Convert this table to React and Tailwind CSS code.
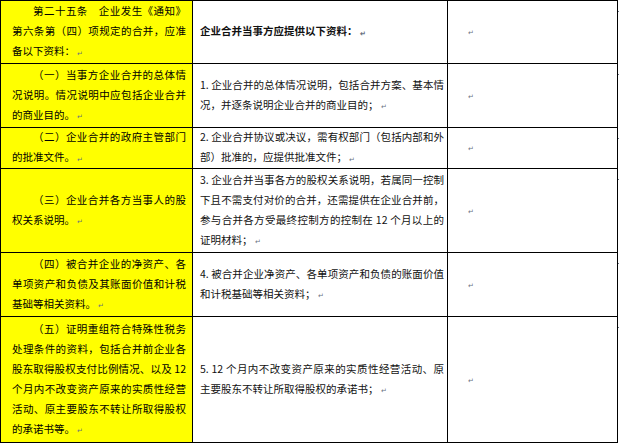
import React from "react";

const rows = [
  {
    h: "h-[63px]",
    left: [["第二十五条　企业发生《通知》", "第六条第（四）项规定的合并，应准", "备以下资料："]],
    right: { bold: true, lines: ["企业合并当事方应提供以下资料："] },
  },
  {
    h: "h-[64px]",
    left: [["（一）当事方企业合并的总体情", "况说明。情况说明中应包括企业合并", "的商业目的。"]],
    right: { lines: ["1. 企业合并的总体情况说明，包括合并方案、基本情", "况，并逐条说明企业合并的商业目的；"] },
  },
  {
    h: "h-[41px]",
    left: [["（二）企业合并的政府主管部门", "的批准文件。"]],
    right: { lines: ["2. 企业合并协议或决议，需有权部门（包括内部和外", "部）批准的，应提供批准文件；"] },
  },
  {
    h: "h-[84px]",
    left: [["（三）企业合并各方当事人的股", "权关系说明。"]],
    right: {
      lines: [
        "3. 企业合并当事各方的股权关系说明，若属同一控制",
        "下且不需支付对价的合并，还需提供在企业合并前，",
        "参与合并各方受最终控制方的控制在 12 个月以上的",
        "证明材料；",
      ],
    },
  },
  {
    h: "h-[64px]",
    left: [["（四）被合并企业的净资产、各", "单项资产和负债及其账面价值和计税", "基础等相关资料。"]],
    right: { lines: ["4. 被合并企业净资产、各单项资产和负债的账面价值", "和计税基础等相关资料；"] },
  },
  {
    h: "h-[127px]",
    last: true,
    left: [[
      "（五）证明重组符合特殊性税务",
      "处理条件的资料，包括合并前企业各",
      "股东取得股权支付比例情况、以及 12",
      "个月内不改变资产原来的实质性经营",
      "活动、原主要股东不转让所取得股权",
      "的承诺书等。",
    ]],
    right: { lines: ["5. 12 个月内不改变资产原来的实质性经营活动、原", "主要股东不转让所取得股权的承诺书；"] },
  },
];

function Mark() {
  return <span className="ml-[2px] align-middle text-[7px] text-gray-500">↵</span>;
}

function Lines({ lines, indent, bold }) {
  return (
    <div className={bold ? "font-bold" : ""}>
      {lines.map((line, i) => {
        const isLast = i === lines.length - 1;
        return (
          <div
            key={i}
            className={
              (isLast ? "text-left" : "text-justify [text-align-last:justify]") +
              (indent && i === 0 ? " pl-[21px]" : "")
            }
          >
            {line}
            {isLast ? <Mark /> : null}
          </div>
        );
      })}
    </div>
  );
}

export default function App() {
  return (
    <div
      className="h-[443px] w-[620px] overflow-hidden bg-white text-[10.5px] leading-[20px] text-[#111]"
      style={{ fontFamily: '"Noto Sans CJK SC", "Noto Sans", sans-serif' }}
    >
      {rows.map((row, idx) => (
        <div key={idx} className={"flex " + row.h}>
          <div
            className={
              "flex w-[193px] flex-col justify-center border-l border-r border-t border-black bg-[#ffff00] pl-[11px] pr-[6px] text-black " +
              (row.last ? "border-b" : "")
            }
          >
            {row.left.map((p, i) => (
              <Lines key={i} lines={p} indent />
            ))}
          </div>
          <div
            className={
              "flex w-[255px] flex-col justify-center border-r border-t border-black pl-[7px] pr-[3px] " +
              (row.last ? "border-b" : "")
            }
          >
            <Lines lines={row.right.lines} bold={row.right.bold} />
          </div>
          <div
            className={
              "flex w-[170px] items-center border-r border-t border-black pl-[18px] " +
              (row.last ? "border-b" : "")
            }
          >
            <Mark />
          </div>
          <div className="w-[2px] pt-[11px]">
            <div className="h-[1px] w-[1px] bg-gray-500" />
          </div>
        </div>
      ))}
    </div>
  );
}
